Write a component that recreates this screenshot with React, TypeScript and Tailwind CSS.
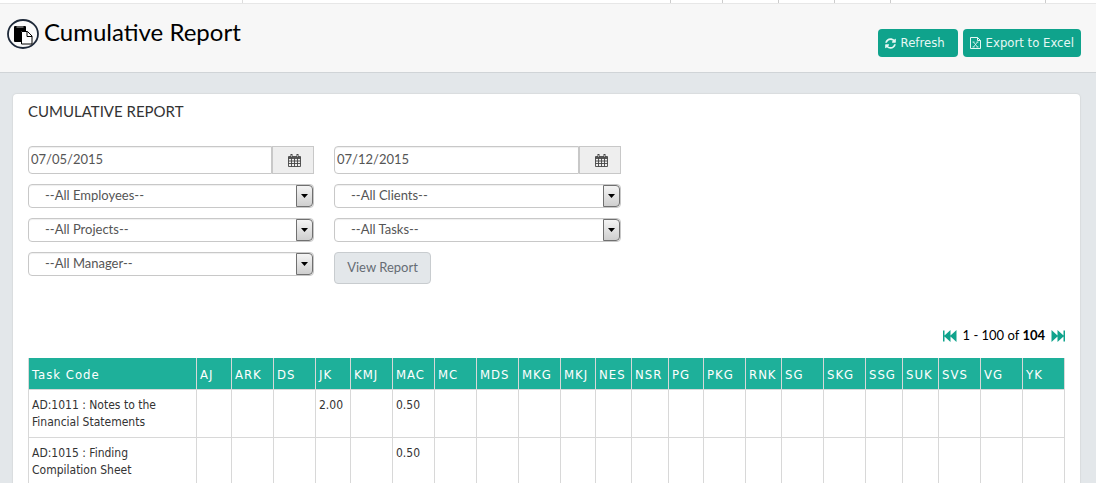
import React from "react";
import { FaSyncAlt } from "react-icons/fa";

const columns: [string, string][] = [
  ["Task Code", "w-[168px]"],
  ["AJ", "w-[35px]"],
  ["ARK", "w-[42px]"],
  ["DS", "w-[42px]"],
  ["JK", "w-[35px]"],
  ["KMJ", "w-[42px]"],
  ["MAC", "w-[42px]"],
  ["MC", "w-[42px]"],
  ["MDS", "w-[42px]"],
  ["MKG", "w-[42px]"],
  ["MKJ", "w-[35px]"],
  ["NES", "w-[36px]"],
  ["NSR", "w-[37px]"],
  ["PG", "w-[35px]"],
  ["PKG", "w-[42px]"],
  ["RNK", "w-[36px]"],
  ["SG", "w-[42px]"],
  ["SKG", "w-[42px]"],
  ["SSG", "w-[37px]"],
  ["SUK", "w-[36px]"],
  ["SVS", "w-[42px]"],
  ["VG", "w-[42px]"],
  ["YK", "w-[42px]"],
];

const rows: { task: string; hours: Record<string, string> }[] = [
  { task: "AD:1011 : Notes to the Financial Statements", hours: { JK: "2.00", MAC: "0.50" } },
  { task: "AD:1015 : Finding Compilation Sheet", hours: { MAC: "0.50" } },
];

function PasteIcon() {
  return (
    <svg viewBox="0 0 32 30" className="h-[30px] w-8" aria-hidden="true">
      <ellipse cx="16" cy="15" rx="15" ry="14" fill="#fafafa" stroke="#1f2a3a" strokeWidth="1.8" />
      <path d="M7 8q0-1 1-1h10q1 0 1 1v4h-5v11H8q-1 0-1-1z" fill="#000" />
      <path d="M9.500 8h7" stroke="#bbb" />
      <path d="M14.500 12.500h6l4.500 4.500v8H14.500z" fill="#fff" stroke="#000" />
      <path d="M20 12.500V17.500h5" fill="none" stroke="#000" />
    </svg>
  );
}

function ExcelIcon() {
  return (
    <svg viewBox="0 0 11 12" className="h-3 w-[11px]" fill="none" stroke="currentColor" aria-hidden="true">
      <path d="M.5.5h7l3 3v8H.5zM7.500.5v3h3" />
      <path d="M3.500 5l4 5M7.500 5l-4 5M2.500 5h2M6.500 5h2M2.500 10h2M6.500 10h2" strokeWidth=".8" />
    </svg>
  );
}

function SkipIcon({ flip = false }: { flip?: boolean }) {
  return (
    <svg viewBox="0 0 14 12" className={flip ? "h-3 w-3.5 rotate-180" : "h-3 w-3.5"} fill="#0fa38c" aria-hidden="true">
      <path d="M0 .5h1.500v5L7.500 0v5.500L13.500 0v12L7.500 6.500V12L1.500 6.500v5H0z" />
    </svg>
  );
}

function CalendarIcon() {
  return (
    <svg viewBox="0 0 13 13" className="h-[13px] w-[13px]" fill="none" stroke="#444" aria-hidden="true">
      <path d="M.5 2.500h12v10H.5zM.5 3.500h12M.5 4.500h12M.5 7h12M.5 9.500h12M3.500 4v8.500M6.500 4v8.500M9.500 4v8.500" strokeWidth=".9" />
      <path d="M3.500 0v3.500M9.500 0v3.500" strokeWidth="2" />
      <path d="M3.500 1v2M9.500 1v2" stroke="#ddd" strokeWidth=".6" />
    </svg>
  );
}

function DateField({ label, value }: { label: string; value: string }) {
  return (
    <div className="flex h-7">
      <input
        aria-label={label}
        defaultValue={value}
        className="min-w-0 flex-1 rounded-l border border-[#c8c8c8] bg-white px-0.5 text-[13px] text-[#555] shadow-[inset_0_1px_1px_#0001] outline-none"
      />
      <button
        type="button"
        aria-label={"Pick " + label}
        className="flex w-[42px] items-center justify-center border border-[#c8c8c8] bg-[#eee] pl-0.5"
      >
        <CalendarIcon />
      </button>
    </div>
  );
}

function SelectField({ label, text }: { label: string; text: string }) {
  return (
    <div className="relative h-6">
      <select
        aria-label={label}
        className="block h-6 w-full appearance-none rounded border border-[#c8c8c8] bg-white pb-0.5 pl-4 text-[13px] leading-5 text-[#555] shadow-[inset_0_1px_1px_#0001] outline-none"
      >
        <option>{text}</option>
      </select>
      <span className="pointer-events-none absolute inset-y-px right-px flex w-[17px] items-center justify-center rounded-r-sm border border-[#707070] bg-linear-to-b from-[#f4f4f4] to-[#cfcfcf]">
        <svg viewBox="0 0 7 4" className="h-1 w-[7px]" aria-hidden="true">
          <path d="M0 0h7L3.500 4z" />
        </svg>
      </span>
    </div>
  );
}

const action =
  "flex h-7 min-w-20 items-center gap-[5px] rounded bg-[#0fa38c] px-[7px] font-['DejaVu_Sans_Condensed','DejaVu_Sans',sans-serif] text-[13px] text-[#e6f8f4]";

export default function App() {
  return (
    <div className="min-h-screen bg-[#e3e7ea] font-[Lato,sans-serif] text-black">
      <div className="flex h-[3px] justify-end bg-white">
        <div className="ml-[242px] flex-1 border-l border-[#ddd]" />
        <div className="w-[52px] border-l border-[#ccc]" />
        <div className="w-14 border-l border-[#ccc]" />
        <div className="w-14 border-l border-[#ccc]" />
        <div className="w-14 border-l border-[#ccc]" />
        <div className="w-[155px] border-l border-[#ccc]" />
        <div className="w-[51px] border-l border-[#ccc]" />
      </div>
      <header className="flex h-[70px] items-start justify-between border-y border-t-[#e7e7e7] border-b-[#d0d4d7] bg-[#f7f7f7] pr-[15px] pl-[7px]">
        <div className="flex items-start gap-[5px] pt-[15px]">
          <PasteIcon />
          <h1 className="text-2xl leading-[26px]">Cumulative Report</h1>
        </div>
        <div className="flex gap-[5px] pt-[25px]">
          <button type="button" className={action}>
            <FaSyncAlt size={11} aria-hidden="true" />
            Refresh
          </button>
          <button type="button" className={action}>
            <ExcelIcon />
            Export to Excel
          </button>
        </div>
      </header>
      <main className="pt-[21px] pr-4 pl-[13px]">
        <section className="rounded-t bg-white px-[15px] pt-[7px] shadow-[0_0_1px_1px_#d9dcde]">
          <h2 className="text-[15px] leading-5 text-[#333]">CUMULATIVE REPORT</h2>
          <form className="mt-[25px] grid grid-cols-[286px_287px] gap-x-5 gap-y-2.5">
            <DateField label="start date" value="07/05/2015" />
            <DateField label="end date" value="07/12/2015" />
            <SelectField label="Employees" text="--All Employees--" />
            <SelectField label="Clients" text="--All Clients--" />
            <SelectField label="Projects" text="--All Projects--" />
            <SelectField label="Tasks" text="--All Tasks--" />
            <SelectField label="Manager" text="--All Manager--" />
            <button type="button" className="h-8 w-[97px] rounded border border-[#c8cccf] bg-[#e3e7ea] text-[13px] text-[#666c74]">
              View Report
            </button>
          </form>
          <nav aria-label="Pages" className="mt-10 flex h-6 items-center justify-end gap-1.5 text-[13px]">
            <button type="button" aria-label="First page">
              <SkipIcon />
            </button>
            <span>
              1 - 100 of <b>104</b>
            </span>
            <button type="button" aria-label="Last page">
              <SkipIcon flip />
            </button>
          </nav>
          <table className="mt-2.5 w-full table-fixed border-collapse text-left font-['DejaVu_Sans_Condensed','DejaVu_Sans',sans-serif]">
            <thead>
              <tr className="h-[31px] bg-[#1eb09a] text-[13px] text-white">
                {columns.map(([name, width]) => (
                  <th
                    key={name}
                    className={width + " border border-t-0 border-[#d8d8d8] pt-0.5 pl-[3px] font-normal tracking-[1px] whitespace-nowrap"}
                  >
                    {name}
                  </th>
                ))}
              </tr>
            </thead>
            <tbody className="text-xs leading-[17px] text-[#333]">
              {rows.map((row) => (
                <tr key={row.task}>
                  {columns.map(([name], i) => (
                    <td key={name} className={(i === 0 ? "pr-6" : "") + " border border-[#d8d8d8] pt-[7px] pb-1.5 pl-[3px] align-top"}>
                      {i === 0 ? row.task : row.hours[name]}
                    </td>
                  ))}
                </tr>
              ))}
            </tbody>
          </table>
        </section>
      </main>
    </div>
  );
}
